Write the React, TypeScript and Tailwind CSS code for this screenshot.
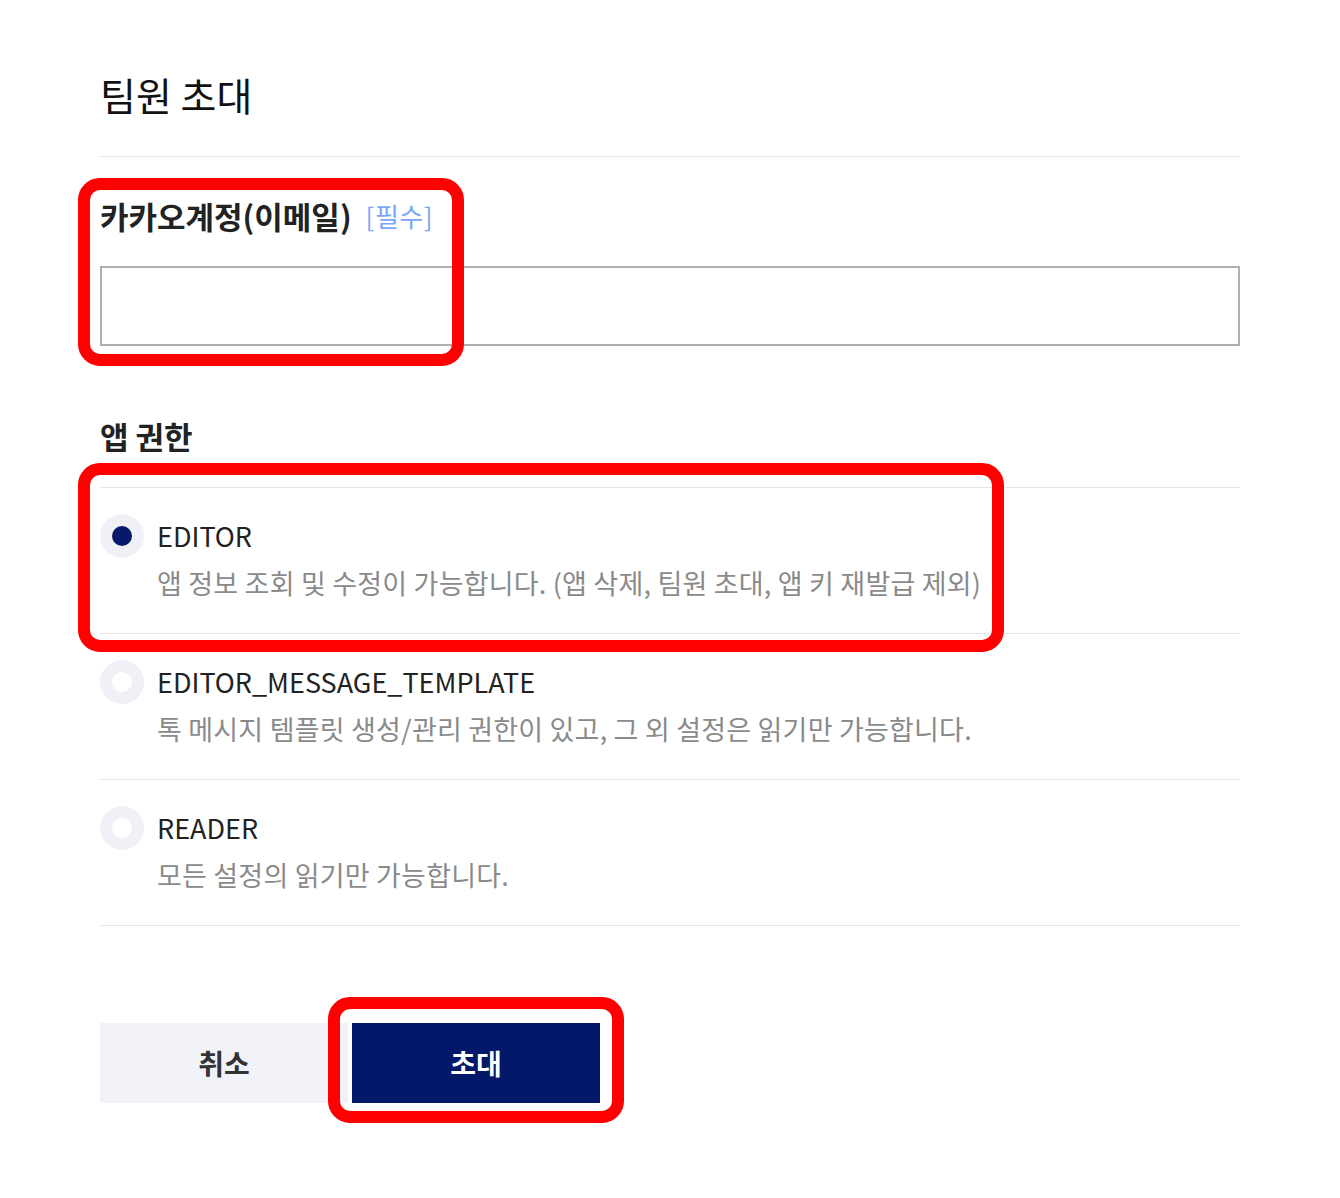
import React from "react";

const roles = [
  {
    name: "EDITOR",
    desc: "앱 정보 조회 및 수정이 가능합니다. (앱 삭제, 팀원 초대, 앱 키 재발급 제외)",
    checked: true,
  },
  {
    name: "EDITOR_MESSAGE_TEMPLATE",
    desc: "톡 메시지 템플릿 생성/관리 권한이 있고, 그 외 설정은 읽기만 가능합니다.",
    checked: false,
  },
  {
    name: "READER",
    desc: "모든 설정의 읽기만 가능합니다.",
    checked: false,
  },
];

function Radio({ checked }: { checked: boolean }) {
  return (
    <span className="flex h-[44px] w-[44px] shrink-0 items-center justify-center rounded-full bg-[#eff1f7]">
      <span
        className={
          checked
            ? "h-[20px] w-[20px] rounded-full bg-[#07196a]"
            : "h-[20px] w-[20px] rounded-full bg-white"
        }
      />
    </span>
  );
}

export default function App() {
  return (
    <div className="relative min-h-[1198px] w-full bg-white font-['Noto_Sans_CJK_KR','Noto_Sans',sans-serif] text-[#222]">
      <div className="px-[100px]">
        <div className="border-b border-[#e6e6e6] pt-[70px] pb-[38px]">
          <h1 className="text-[39px] leading-[48px] font-normal text-[#111]">팀원 초대</h1>
        </div>

        <div className="mt-[39px] flex items-center leading-[40px]">
          <span className="text-[31px] font-bold text-[#222]">카카오계정(이메일)</span>
          <span className="ml-[14px] text-[26px] tracking-[0.5px] text-[#7aa7f5]">[필수]</span>
        </div>
        <input
          className="mt-[30px] block h-[80px] w-full border-2 border-[#b0b0b0] bg-white px-4 text-[24px] outline-none"
          type="text"
        />

        <div className="mt-[70px] text-[31px] leading-[40px] font-bold text-[#222]">앱 권한</div>

        <div className="mt-[31px] border-t border-[#e6e6e6]">
          {roles.map((r) => (
            <div key={r.name} className="flex h-[146px] border-b border-[#e6e6e6]">
              <div className="flex pt-[26px]">
                <Radio checked={r.checked} />
              </div>
              <div className="ml-[13px] pt-[30px]">
                <div className="text-[27px] leading-[36px] text-[#222]">{r.name}</div>
                <div className="mt-[11px] text-[27px] leading-[36px] tracking-[0.2px] text-[#8a8a8a]">{r.desc}</div>
              </div>
            </div>
          ))}
        </div>

        <div className="mt-[97px] flex gap-[4px]">
          <button className="h-[80px] w-[248px] bg-[#f1f3f9] text-[28px] font-bold text-[#333]">취소</button>
          <button className="h-[80px] w-[248px] bg-[#04186a] text-[28px] font-bold text-white">초대</button>
        </div>
      </div>

      <div className="pointer-events-none absolute left-[78px] top-[178px] h-[188px] w-[386px] rounded-[22px] border-[12px] border-[#ff0000]" />
      <div className="pointer-events-none absolute left-[78px] top-[463px] h-[189px] w-[926px] rounded-[22px] border-[12px] border-[#ff0000]" />
      <div className="pointer-events-none absolute left-[328px] top-[997px] h-[126px] w-[296px] rounded-[22px] border-[12px] border-[#ff0000]" />
    </div>
  );
}
